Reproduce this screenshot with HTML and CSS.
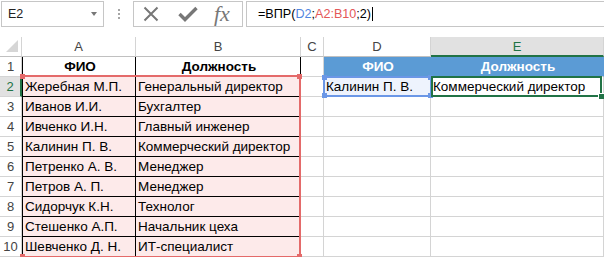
FILE: index.html
```html
<!DOCTYPE html>
<html lang="ru">

<head>
    <meta charset="UTF-8" />
    <title>ВПР</title>
    <link rel="stylesheet" href="styles.css">
</head>

<body>
    <div class="toolbar">
        <div class="namebox"><span>E2</span><span class="caret"></span></div>
        <div class="grip"><i></i><i></i><i></i></div>
        <div class="fxbox">
            <svg class="ico-x" width="16" height="16" viewBox="0 0 16 16">
                <path d="M1.5 1.5 L14.5 14.5 M14.5 1.5 L1.5 14.5" stroke="#777" stroke-width="2" fill="none" />
            </svg>
            <svg class="ico-ok" width="20" height="16" viewBox="0 0 20 16">
                <path d="M1.5 8 L7 13.5 L18.5 2" stroke="#777" stroke-width="3.4" fill="none" />
            </svg>
            <span class="fx">fx</span>
        </div>
        <div class="formula">=ВПР(<span class="ref-d">D2</span>;<span class="ref-a">A2:B10</span>;2)<span class="cursor"></span></div>
    </div>

    <div class="sheet">
        <div class="cells">
            <!-- column headers -->
            <div class="c corner"><span class="tri"></span></div>
            <div class="c hd">A</div>
            <div class="c hd">B</div>
            <div class="c hd">C</div>
            <div class="c hd">D</div>
            <div class="c hd on">E</div>

            <div class="c rn">1</div>
            <div class="c t first head">ФИО</div>
            <div class="c t head">Должность</div>
            <div class="c"></div>
            <div class="c blue-h">ФИО</div>
            <div class="c blue-h">Должность</div>

            <div class="c rn on">2</div>
            <div class="c t first pk">Жеребная М.П.</div>
            <div class="c t pk">Генеральный директор</div>
            <div class="c"></div>
            <div class="c lookup">Калинин П. В.</div>
            <div class="c">Коммерческий директор</div>

            <div class="c rn">3</div>
            <div class="c t first pk">Иванов И.И.</div>
            <div class="c t pk">Бухгалтер</div>
            <div class="c"></div>
            <div class="c"></div>
            <div class="c"></div>

            <div class="c rn">4</div>
            <div class="c t first pk">Ивченко И.Н.</div>
            <div class="c t pk">Главный инженер</div>
            <div class="c"></div>
            <div class="c"></div>
            <div class="c"></div>

            <div class="c rn">5</div>
            <div class="c t first pk">Калинин П. В.</div>
            <div class="c t pk">Коммерческий директор</div>
            <div class="c"></div>
            <div class="c"></div>
            <div class="c"></div>

            <div class="c rn">6</div>
            <div class="c t first pk">Петренко А. В.</div>
            <div class="c t pk">Менеджер</div>
            <div class="c"></div>
            <div class="c"></div>
            <div class="c"></div>

            <div class="c rn">7</div>
            <div class="c t first pk">Петров А. П.</div>
            <div class="c t pk">Менеджер</div>
            <div class="c"></div>
            <div class="c"></div>
            <div class="c"></div>

            <div class="c rn">8</div>
            <div class="c t first pk">Сидорчук К.Н.</div>
            <div class="c t pk">Технолог</div>
            <div class="c"></div>
            <div class="c"></div>
            <div class="c"></div>

            <div class="c rn">9</div>
            <div class="c t first pk">Стешенко А.П.</div>
            <div class="c t pk">Начальник цеха</div>
            <div class="c"></div>
            <div class="c"></div>
            <div class="c"></div>

            <div class="c rn">10</div>
            <div class="c t first pk">Шевченко Д. Н.</div>
            <div class="c t pk">ИТ-специалист</div>
            <div class="c"></div>
            <div class="c"></div>
            <div class="c"></div>
        </div>

        <!-- selection frames drawn over the cells -->
        <div class="marks">
            <div class="mark-red">
                <span class="hnd tl"></span><span class="hnd tr"></span>
                <span class="hnd bl"></span><span class="hnd br"></span>
            </div>
            <div class="mark-blue">
                <span class="hnd tl"></span><span class="hnd tr"></span>
                <span class="hnd bl"></span><span class="hnd br"></span>
            </div>
            <div class="mark-green"><span class="fill-hnd"></span></div>
        </div>
    </div>
</body>

</html>
```

FILE: styles.css
```css
body {
    margin: 0;
    background: #fff;
    font-family: "Liberation Sans", Arial, sans-serif;
    overflow: hidden;
}

/* ---------- formula bar ---------- */
.toolbar {
    display: flex;
    align-items: flex-start;
    height: 26px;
    padding-top: 1px;
}

.namebox {
    box-sizing: border-box;
    width: 103px;
    height: 26px;
    margin-left: 1px;
    border: 1px solid #c6c6c6;
    display: flex;
    align-items: center;
    padding-left: 6px;
    font-size: 12.5px;
    color: #222;
}

.caret {
    margin-left: auto;
    margin-right: 6px;
    border-left: 3.5px solid transparent;
    border-right: 3.5px solid transparent;
    border-top: 4px solid #777;
}

.grip {
    width: 29px;
    height: 26px;
    display: flex;
    flex-direction: column;
    align-items: center;
    justify-content: center;
    gap: 2px;
}

.grip i {
    width: 2px;
    height: 2px;
    background: #a6a6a6;
}

.fxbox {
    box-sizing: border-box;
    width: 110px;
    height: 26px;
    border: 1px solid #c6c6c6;
    display: flex;
    align-items: center;
    padding-left: 9px;
}

.ico-ok {
    margin-left: 19px;
}

.fx {
    margin-left: 16px;
    font-family: "Liberation Serif", "Times New Roman", serif;
    font-style: italic;
    font-size: 22px;
    color: #777;
    line-height: 1;
}

.formula {
    box-sizing: border-box;
    flex: 1;
    height: 26px;
    margin-left: 3px;
    border: 1px solid #c6c6c6;
    border-right: none;
    padding-left: 11px;
    display: flex;
    align-items: center;
    font-size: 12.6px;
    color: #000;
}

.ref-d {
    color: #4f86e0;
}

.ref-a {
    color: #e45858;
}

.cursor {
    width: 1px;
    height: 14px;
    margin-left: 1px;
    background: #000;
}

/* ---------- sheet ---------- */
.sheet {
    display: grid;
    margin-top: 10px;
}

.cells,
.marks {
    grid-area: 1 / 1;
    display: grid;
    grid-template-columns: 22px 114px 165px 23px 107px 173px;
    grid-template-rows: repeat(11, 20px);
}

.c {
    box-sizing: border-box;
    border-right: 1px solid #d4d4d4;
    border-bottom: 1px solid #d4d4d4;
    padding-left: 2px;
    font-size: 13.5px;
    line-height: 19px;
    white-space: nowrap;
    overflow: hidden;
    color: #000;
}

.hd,
.rn {
    padding-left: 0;
    text-align: center;
    color: #444;
    font-size: 13px;
}

.hd {
    border-bottom-color: #c0c0c0;
}

.hd.on {
    background: #e1e1e1;
    color: #217346;
    border-bottom: 2px solid #217346;
}

.rn.on {
    background: #e1e1e1;
    color: #217346;
    border-right: 2px solid #217346;
}

.corner {
    position: relative;
    border-bottom-color: #c0c0c0;
}

.tri {
    position: absolute;
    right: 3px;
    bottom: 4px;
    width: 0;
    height: 0;
    border-left: 12px solid transparent;
    border-bottom: 12px solid #d6d6d6;
}

.t {
    border-right-color: #000;
    border-bottom-color: #000;
}

.t.first {
    border-left: 1px solid #000;
}

.head {
    font-weight: bold;
    text-align: center;
}

.pk {
    background: #fdeaea;
}

.blue-h {
    background: #5b9bd5;
    border-right-color: #5b9bd5;
    color: #fff;
    font-weight: bold;
    text-align: center;
}

.lookup {
    background: #eef3fd;
}

/* ---------- selection frames ---------- */
.marks {
    pointer-events: none;
}

.mark-red {
    grid-column: 2 / 4;
    grid-row: 3 / 12;
    margin: -2px 0 -1px 0;
    border: 2px solid #e46a6a;
    border-left: none;
    position: relative;
}

.mark-blue {
    grid-column: 5 / 6;
    grid-row: 3 / 4;
    margin: -1px -1px 0 -1px;
    border: 2px solid #6b97e6;
    position: relative;
}

.mark-green {
    grid-column: 6 / 7;
    grid-row: 3 / 4;
    margin: -1px 2px 0 0;
    border: 2px solid #217346;
    position: relative;
}

.hnd {
    position: absolute;
    width: 5px;
    height: 5px;
}

.mark-red .hnd {
    background: #e46a6a;
}

.mark-blue .hnd {
    background: #6b97e6;
}

.hnd.tl { left: -2px; top: -3px; }
.hnd.tr { right: -3px; top: -3px; }
.hnd.bl { left: -2px; bottom: -3px; }
.hnd.br { right: -3px; bottom: -3px; }

.mark-blue .hnd.tl,
.mark-blue .hnd.bl {
    left: -3px;
}

.fill-hnd {
    position: absolute;
    right: -4px;
    bottom: -4px;
    width: 5px;
    height: 5px;
    background: #217346;
    border-left: 1px solid #fff;
    border-top: 1px solid #fff;
}
```
